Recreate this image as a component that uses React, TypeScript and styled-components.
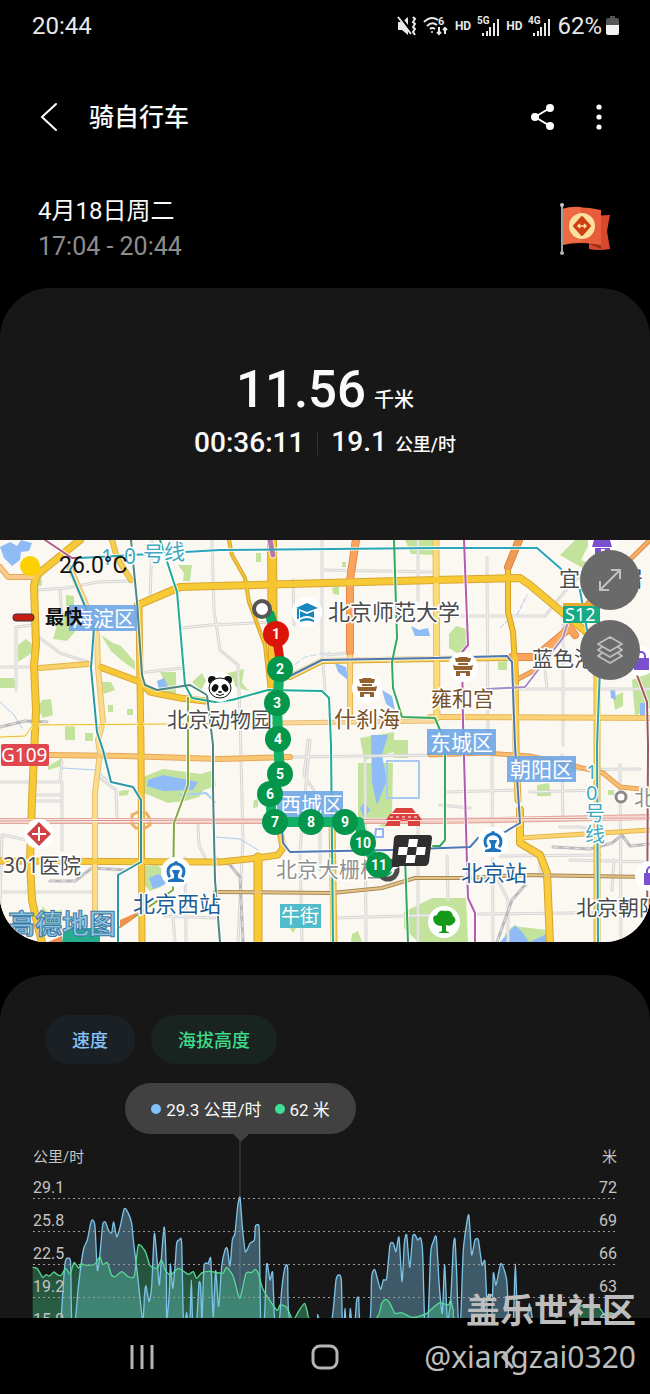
import React from "react";
import styled, { createGlobalStyle, css } from "styled-components";

const sans = `Roboto, "Noto Sans CJK SC", sans-serif`;
const mapSans = `"Noto Sans", "Noto Sans CJK SC", sans-serif`;

const GlobalStyle = createGlobalStyle`
  * { box-sizing: border-box; }
  body { margin: 0; background: #000; font-family: ${sans}; color: #fafafa; }
  button { font: inherit; color: inherit; background: none; border: 0; padding: 0; cursor: pointer; }
  h1, h2, p { margin: 0; font-weight: inherit; }
  svg { display: block; }
`;

const Screen = styled.div`
  position: relative;
  display: flex;
  flex-direction: column;
  height: 100vh;
  overflow: hidden;
`;

const StatusBar = styled.header`
  display: flex;
  align-items: center;
  justify-content: space-between;
  flex: none;
  height: 52px;
  padding: 0 30px 0 32px;
  font-size: 24px;
  color: #e8e8e8;
`;

const StatusIcons = styled.div`
  display: flex;
  align-items: center;
  gap: 6px;
`;

const Hd = styled.span`
  font-size: 12px;
  font-weight: 700;
`;

const BatteryGroup = styled.span`
  display: flex;
  align-items: center;
  gap: 4px;
`;

const Content = styled.main`
  flex: 1;
  min-height: 0;
  overflow: hidden;
`;

const AppBar = styled.div`
  display: flex;
  align-items: center;
  height: 130px;
  padding: 0 38px 0 36px;
`;

const Title = styled.h1`
  flex: 1;
  padding: 2px 0 0 27px;
  font-size: 25px;
  line-height: 36px;
  font-weight: 500;
`;

const IconButton = styled.button`
  display: grid;
  place-items: center;
  width: 26px;
  height: 36px;
  & + & { margin-left: 30px; }
`;

const DateRow = styled.section`
  display: flex;
  align-items: center;
  justify-content: space-between;
  height: 106px;
  padding: 0 39px 12px 38px;
`;

const DateText = styled.h2`
  font-size: 24px;
  line-height: 36px;
`;

const TimeRange = styled.p`
  font-size: 25px;
  line-height: 36px;
  color: #8d8d8d;
`;

const Summary = styled.section`
  display: flex;
  flex-direction: column;
  align-items: center;
  height: 252px;
  padding-top: 72px;
  background: #171717;
  border-radius: 50px 50px 0 0;
  font-weight: 500;
`;

const Distance = styled.p`
  font-size: 51px;
  line-height: 60px;
`;

const Unit = styled.span<{ $size: number }>`
  margin-left: 8px;
  font-size: ${(p) => p.$size}px;
`;

const Stats = styled.div`
  display: flex;
  align-items: center;
  height: 26px;
  font-size: 28px;
  line-height: 26px;
`;

const Divider = styled.span`
  width: 1px;
  height: 24px;
  margin: 0 13px;
  background: #333;
`;

const MapPanel = styled.section`
  position: relative;
  height: 402px;
  overflow: hidden;
  border-radius: 0 0 46px 46px;
  background: #fbf8f1;
`;

const MapTools = styled.div`
  position: absolute;
  top: 10px;
  right: 10px;
  display: grid;
  gap: 10px;
`;

const RoundButton = styled.button`
  display: grid;
  place-items: center;
  width: 60px;
  height: 60px;
  border-radius: 50%;
  background: #6a6a6a;
`;

const ChartCard = styled.section`
  height: 400px;
  margin-top: 33px;
  padding-top: 40px;
  background: #171717;
  border-radius: 46px 46px 0 0;
`;

const Chips = styled.div`
  display: flex;
  gap: 16px;
  padding-left: 45px;
`;

const Chip = styled.button<{ $tone: "speed" | "height" }>`
  height: 49px;
  padding: 0 27px 2px;
  border-radius: 25px;
  font-size: 18px;
  font-weight: 500;
  ${(p) =>
    p.$tone === "speed"
      ? css`color: #86c0f8; background: #1b2025;`
      : css`color: #3fd98a; background: #19231f;`}
`;

const Tip = styled.div`
  position: relative;
  display: flex;
  align-items: center;
  justify-content: center;
  width: 231px;
  height: 51px;
  margin: 19px 0 0 125px;
  border-radius: 26px;
  background: #414141;
  font-size: 17px;
  &::after {
    content: "";
    position: absolute;
    top: 100%;
    left: 50%;
    margin-left: -8px;
    border: 8px solid transparent;
    border-top-color: #414141;
    border-bottom: 0;
  }
`;

const Dot = styled.span<{ $color: string }>`
  width: 10px;
  height: 10px;
  margin-right: 5px;
  border-radius: 50%;
  background: ${(p) => p.$color};
  span + & { margin-left: 13px; }
`;

const Chart = styled.div`
  position: relative;
  margin-top: 6px;
  padding: 0 33px;
  color: #c4c4c4;
  font-size: 16px;
`;

const ChartDrawing = styled.svg`
  position: absolute;
  left: 0;
  top: 0;
  width: 100%;
  height: 178px;
`;

const AxisRow = styled.div`
  position: relative;
  display: flex;
  justify-content: space-between;
  align-items: flex-end;
  height: 33px;
  padding-bottom: 1px;
  line-height: 20px;
  background: repeating-linear-gradient(90deg, #9a9a9a 0 2px, transparent 2px 5px) left bottom / 100% 1px no-repeat;
`;

const AxisTitles = styled.div`
  position: relative;
  display: flex;
  justify-content: space-between;
  height: 26px;
  padding-top: 7px;
  font-size: 15px;
  line-height: 20px;
`;

const NavBar = styled.nav`
  display: grid;
  grid-template-columns: repeat(3, 1fr);
  flex: none;
  height: 76px;
  padding: 2px 51px 0;
  background: #000;
  button { display: grid; place-items: center; }
`;

const Watermark = styled.div`
  position: absolute;
  right: 14px;
  bottom: 14px;
  text-align: right;
  color: #bdbdbd;
  pointer-events: none;
`;

const WatermarkName = styled.p`
  font-size: 34px;
  line-height: 46px;
  font-weight: 700;
`;

const WatermarkUser = styled.p`
  font-family: "Noto Sans", sans-serif;
  font-size: 30px;
  line-height: 46px;
`;

const Line = styled.path`
  fill: none;
  stroke-linejoin: round;
  stroke-linecap: round;
`;

const Place = styled.text<{ $tone?: string; $size?: number }>`
  font-family: ${mapSans};
  font-size: ${(p) => p.$size ?? 21}px;
  fill: ${(p) => p.$tone ?? "#4b4b4b"};
  stroke: #fff;
  stroke-width: 3px;
  stroke-linejoin: round;
  paint-order: stroke;
`;

const TagText = styled.text<{ $size?: number }>`
  font-family: ${mapSans};
  font-size: ${(p) => p.$size ?? 21}px;
  fill: #fff;
`;

const MapInfo = styled.text<{ $bold?: boolean }>`
  font-family: ${sans};
  font-size: ${(p) => (p.$bold ? 19 : 23)}px;
  font-weight: ${(p) => (p.$bold ? 700 : 400)};
  fill: #111;
`;

const StopText = styled.text`
  font-family: ${sans};
  font-size: 14px;
  font-weight: 700;
  fill: #fff;
  text-anchor: middle;
`;

const Brand = styled.text`
  font-family: "Noto Sans CJK SC", sans-serif;
  font-size: 27px;
  font-weight: 700;
  fill: #8fc4de;
  stroke: #3b78a6;
  stroke-width: 1px;
`;

/* ---------- map data ---------- */

const streets = [
  "M38 50 L66 48 L98 42 L130 41", "M0 127 L33 127", "M16 150 L16 87 L34 85", "M60 50 L62 78",
  "M40 98 L60 113 L88 122", "M138 133 L182 128", "M182 88 L220 84", "M212 0 L214 70 L220 110 L238 125 L240 175 L243 300 L238 402",
  "M215 85 L272 82", "M293 40 L294 85", "M322 0 L322 112 L325 150", "M322 30 L436 32", "M326 115 L350 113", "M418 0 L418 60",
  "M487 18 L488 205", "M436 76 L545 76 L570 45 L610 10", "M563 85 L563 205", "M516 149 L650 149", "M545 130 L547 148",
  "M0 242 L60 242 L62 222", "M62 242 L62 310", "M36 255 L60 255", "M36 261 L60 261", "M0 300 L4 295 L26 300", "M0 352 L95 352",
  "M100 238 L116 250 L117 278", "M198 285 L199 305 L205 318", "M172 365 L175 402", "M0 365 L2 295", "M165 376 L215 378", "M310 200 L300 310 L302 402",
  "M308 200 L304 235 L320 260 L320 330", "M290 217 L436 215", "M333 378 L436 375", "M365 220 L366 402", "M448 252 L520 250", "M530 252 L597 250",
  "M492 213 L493 402", "M562 215 L563 280", "M447 316 L448 360", "M500 316 L600 315", "M570 320 L650 322", "M498 340 L508 360 L508 402",
  "M478 374 L650 372", "M620 225 L621 402", "M540 312 L540 335", "M614 320 L612 350", "M440 265 L470 268", "M560 287 L580 287 L598 290",
  "M418 280 L418 402", "M520 230 L640 229", "M152 0 L150 60", "M185 318 L186 402",
];

const parks = [
  "M66 55 l8 1 l0 10 l-8 0z", "M60 75 l5 -3 l10 20 l-8 9 l-14 -2z", "M35 28 l6 -2 l1 19 l-6 3z", "M18 105 l8 -6 l6 5 l0 9 l-14 9z",
  "M178 25 l14 0 l-2 16 l-7 0 l1 -8z", "M101 95 l12 8 l8 3 l14 16 l0 8 l-14 -10 l-10 -9z", "M99 142 l12 0 l4 8 l-11 4z", "M160 132 l16 0 l0 26 l-14 -6 l3 -10z",
  "M192 142 l10 -9 l4 8 l-5 9z", "M108 165 l5 0 l0 7 l-5 0z", "M127 169 l6 0 l0 6 l-6 0z", "M42 160 l9 -1 l2 16 l-10 3 l-6 -10z", "M0 138 l14 0 l2 10 l-16 0z",
  "M65 185 l10 0 l0 15 l-10 0z", "M85 193 l8 0 l0 8 l-8 0z", "M224 134 l20 -5 l-2 14 l7 8 l-13 -4z", "M256 13 l5 0 l0 9 l-5 0z",
  "M342 22 l4 0 l0 5 l-4 0z", "M332 48 l7 -2 l0 9 l-6 -1z", "M405 0 l28 0 l0 15 l-22 -1z", "M449 94 l7 -8 l10 3 l0 22 l-8 3 l-9 -6z",
  "M560 15 l15 -15 l16 0 l-10 20 l10 4 l-5 6z", "M498 122 l9 -1 l0 9 l-9 0z", "M613 157 l10 -5 l0 14 l-8 4z", "M632 140 l18 -8 l0 36 l-15 8z", "M600 23 l12 -4 l-3 10z",
  "M48 226 l14 -8 l0 8 l-14 4z", "M143 237 l20 -8 l38 5 l12 -4 l3 16 l-12 4 l-5 7 l-14 4 l-17 2 l-24 -10z", "M119 251 l10 -1 l-1 5 l-9 1z",
  "M144 326 l14 -1 l5 6 l-2 16 l-11 4 l-6 -6z", "M42 366 l6 6 l14 -2 l-2 18 l-17 -2z", "M358 223 l35 0 l-1 55 l-34 0z", "M393 200 l15 0 l0 18 l-14 0z",
  "M387 282 l-1 5 l-8 -1z", "M404 372 l28 -14 l34 0 l2 44 l-50 0 l-14 -14z", "M537 245 l12 -2 l2 13 l-14 0z", "M608 250 l6 0 l0 5 l-6 0z",
  "M505 394 l8 -8 l34 4 l-2 12 l-40 0z", "M352 394 l6 -3 l4 11 l-11 0z", "M360 198 l34 -6 l0 20 l-30 8z", "M254 260 l4 -1 l0 8 l-5 1z", "M288 386 l8 2 l-3 5z",
];

const waters = [
  "M0 7 L10 2 L17 6 L21 0 L32 3 L29 11 L21 12 L20 20 L12 26 L4 18z", "M157 141 l7 -3 l4 8 l-9 4z", "M148 240 l15 -5 l35 7 l-5 8 l-30 1 l-16 -5z",
  "M149 338 l9 -4 l10 6 l-4 5 l-11 4z", "M371 195 l17 0 l-6 20 l5 25 l-10 25 l-5 -22z", "M360 268 l5 -6 l5 8 l-6 8z", "M335 123 l11 4 l2 13 l-10 -8z",
  "M382 150 l10 6 l3 14 l-9 -6z", "M411 86 l8 4 l9 -2 l2 8 l-15 0z", "M515 385 l8 8 l6 9 l18 -8 l1 8 l-48 0z", "M610 147 l5 3 l1 10 l-5 -2z", "M640 163 l5 0 l0 12 l-5 2z",
];

type Route = [string, string, number, string?];

/* path, colour, width, edge colour */
const roads: Route[] = [
  ["M0 281 L440 281 L650 277", "#f4c9bd", 5, "#dda79c"],
  ["M0 27 L8 37 L34 37", "#f8c98a", 5, "#e2a75a"],
  ["M70 28 L85 62 L97 95 L98 128 L103 182 L98 200 L100 213 L95 253 L95 373", "#fbdc8e", 5, "#eac069"],
  ["M112 0 L117 18 L131 40", "#f7cf4f", 5, "#dfb043"],
  ["M40 128 L88 124", "#f8d268", 5, "#e3b54b"],
  ["M50 215 L123 216 L220 219 L290 217", "#f9c672", 5, "#e4a75a"],
  ["M275 183 L435 181", "#fad79a", 4, "#e8bd76"],
  ["M430 177 L650 178", "#fad277", 5, "#e8b659"],
  ["M436 0 L437 178", "#fbdc7d", 6, "#e9bd5b"],
  ["M355 0 L350 35 L350 110 L350 181", "#fbd47b", 5, "#e8b458"],
  ["M356 0 L350 40 L350 112", "#f9a35d", 7, "#e58a48"],
  ["M512 117 L535 117 L570 88 L575 95", "#f9a35d", 7, "#e58a48"],
  ["M650 0 L604 45 L566 88 L535 130 L518 139", "#f7ae62", 4, "#e08e4c"],
  ["M430 215 L485 213 L530 216 L570 225 L603 233 L620 247 L650 250", "#f9bd6c", 4, "#e09f55"],
  ["M520 298 L650 290", "#fad46f", 4, "#e6b553"],
  ["M597 128 L597 402", "#f9d35c", 6, "#dfb23f"],
  ["M515 118 L516 205 L518 260", "#f9cf50", 6, "#dcae3d"],
  ["M332 281 L334 402", "#f9d35c", 6, "#dfb23f"],
  ["M100 127 L140 142 L150 152 L180 158 L205 161", "#f7c937", 6, "#dba634"],
  ["M290 137 L322 121 L435 119 L507 118", "#f8d45a", 5, "#d7a838"],
  ["M0 321 L220 322 L258 318 L278 315 L283 308 L280 290", "#f7ca3b", 6, "#d8a733"],
  ["M139 65 L140 142 L141 205 L142 402", "#f7ca3b", 6, "#dba534"],
  ["M80 0 L37 35 L34 45 L36 105 L34 125 L36 170 L32 260 L30 323 L32 360 L38 387 L42 402", "#f7c934", 7, "#d9a733"],
  ["M138 65 L180 47 L215 46 L362 42 L435 40 L520 38 L530 45 L562 72 L590 95", "#f7c934", 7, "#d8a733"],
  ["M272 0 L273 150", "#f7c430", 9, "#d6a32c"],
  ["M258 317 L258 402", "#f9c933", 8, "#d6a32c"],
  ["M520 270 L520 303 L540 315 L547 333 L550 402", "#f9cd3e", 7, "#d6a32c"],
  ["M520 0 L508 28 L508 72 L513 92 L516 142", "#f5c62f", 5, "#cf9f2e"],
  ["M519 0 L508 27", "#f19a52", 7, "#d98442"],
  ["M229 0 L232 15 L245 38 L249 62 L265 105 L270 152", "#f4c62f", 3, "#d3a42f"],
  ["M0 197 L25 196 L33 185 L175 184 L275 183", "#e7bd2d", 2, "#fdf7dc"],
  ["M215 352 L332 353 L382 348 L415 338 L467 338 L520 335 L650 337", "#e2c38b", 3, "#a98952"],
];

const metro: Route[] = [
  ["M45 0 L72 18 L80 18", "#b25a8a", 2],
  ["M270 0 L273 15", "#b27bb0", 5],
  ["M80 18 L220 10 L435 8 L537 8 L560 28 L580 50 L587 90 L600 128 L597 205 L598 402", "#2aa5b8", 2],
  ["M78 18 L70 30 L94 88 L91 128 L97 192 L103 210 L111 242 L133 247 L141 260 L141 322 L118 335 L118 402", "#2a97a6", 2],
  ["M160 0 L177 52 L185 145 L192 158 L215 162 L232 160 L268 150 L322 151 L329 158 L331 205 L333 402", "#1fab98", 2],
  ["M131 0 L137 62 L142 135 L145 145 L157 150 L190 145 L207 155 L213 205 L213 250 L215 340 L220 402", "#4d8580", 2],
  ["M188 158 L188 245 L174 283 L173 350 L120 387", "#83a83b", 2],
  ["M394 0 L397 98 L392 122 L393 148 L402 177 L435 178 L442 195 L445 213 L445 300 L440 306 L433 306", "#35a85a", 2],
  ["M405 317 L408 402", "#35a85a", 2],
  ["M464 0 L468 105 L462 112 L463 182 L468 358 L475 373 L475 402", "#b45aae", 2],
  ["M290 136 L322 120 L435 118 L507 116 L512 122 L515 205 L517 237 L520 283 L505 292 L478 298 L470 307 L390 310 L290 312 L283 303 L282 290", "#4d78b4", 2],
  ["M487 149 L525 147 L563 98 L567 85", "#a08ec4", 2],
  ["M637 135 L647 162 L648 205 L647 402", "#a2575c", 2],
  ["M0 281 L650 278", "#d58d88", 1],
];

const rails = [
  "M0 187 L25 181 L47 182", "M50 341 L75 341 L92 328 L125 330", "M497 402 L512 360 L525 345", "M553 307 L590 309 L612 303 L622 295 L630 306 L650 304",
  "M215 318 L230 325 L240 337 L243 402",
];

const stops: [number, number][] = [
  [276, 94], [280, 129], [277, 163], [278, 199], [280, 234], [270, 254], [275, 282], [311, 282], [345, 282], [363, 303], [379, 325],
];

const tags: [string, number, number, number, string][] = [
  ["海淀区", 69, 65, 68, "#6ea5e5"], ["西城区", 277, 251, 66, "#6ea5e5"], ["东城区", 427, 189, 69, "#6ea5e5"], ["朝阳区", 507, 216, 69, "#6ea5e5"],
];

const lineName: [string, number, number][] = [["1", 101, 25], ["0", 124, 24], ["号", 143, 21], ["线", 164, 19]];

const Pagoda = ({ x, y }: { x: number; y: number }) => (
  <g transform={`translate(${x} ${y})`}>
    <circle r="15" fill="#fff" />
    <g fill="#94612f">
      <path d="M-8 -9 L-5 -9 L-4 -10 H4 L5 -9 L8 -9 L7 -5 H-7z M-5 -4 H5 V-2 H-5z M-10 -2 L-7 -1 H7 L10 -2 L9 3 H-9z" />
      <path d="M-7 4 H7 V9 H3 V6 H-3 V9 H-7z" />
    </g>
  </g>
);

const Station = ({ x, y }: { x: number; y: number }) => (
  <g transform={`translate(${x} ${y})`}>
    <circle r="15" fill="#fff" />
    <path d="M-6 5 A8 8 0 1 1 6 5" fill="none" stroke="#1d74bd" strokeWidth="3" />
    <circle cy="-9" r="2" fill="#1d74bd" />
    <path d="M-4 -2 H4 L3 1 L2 2 V6 L8 8 V10 H-8 V8 L-2 6 V2 L-3 1z" fill="#1d74bd" />
  </g>
);

const Bag = ({ x, y }: { x: number; y: number }) => (
  <g transform={`translate(${x} ${y})`}>
    <circle r="15" fill="#fff" />
    <path d="M-3 -3 V-5 A4 4 0 0 1 5 -5 V-3" fill="none" stroke="#7a4fd0" strokeWidth="2" />
    <path d="M-6 -3 H9 V9 H-6z" fill="#7a4fd0" />
  </g>
);

const RideMap = () => (
  <svg width="100%" height="402" viewBox="0 0 650 402" preserveAspectRatio="xMidYMid slice" role="img" aria-label="骑行路线">
    <rect width="650" height="402" fill="#fbf8f1" />
    {parks.map((d) => <path key={d} d={d} fill="#c3e39d" />)}
    {waters.map((d) => <path key={d} d={d} fill="#8fbcf6" />)}
    <g>
      {streets.map((d) => <Line key={d} d={d} stroke="#d9d7d6" strokeWidth="3" />)}
      {streets.map((d) => <Line key={d} d={d} stroke="#f3f1ee" strokeWidth="1" />)}
    </g>
    <Line d="M387 221 H419 V258 H387z" stroke="#a9c9f0" strokeWidth="2" fill="#fbf8f1" />
    <Line d="M62 228 L95 230 L108 240" stroke="#a8cdf2" strokeWidth="1" />
    <Line d="M180 255 L206 253 L215 262" stroke="#a8cdf2" strokeWidth="2" />
    <Line d="M215 297 L240 299 L258 310" stroke="#a8cdf2" strokeWidth="1" />
    <Line d="M288 130 L305 117 L330 112" stroke="#bcd3ee" strokeWidth="1" strokeDasharray="6 3" />
    <Line d="M0 162 L14 175 L22 188" stroke="#a8cdf2" strokeWidth="1" />
    <Line d="M517 75 L527 55 M500 88 L512 76" stroke="#a8c6ee" strokeWidth="1" strokeDasharray="5 2" />
    {rails.map((d) => <Line key={d} d={d} stroke="#b9b9bc" strokeWidth="3" />)}
    {rails.map((d) => <Line key={d} d={d} stroke="#ecebeb" strokeWidth="1" strokeDasharray="5 6" />)}
    {roads.map(([d, , w, edge]) => <Line key={d} d={d} stroke={edge} strokeWidth={w + 1} />)}
    {roads.map(([d, color, w]) => <Line key={d} d={d} stroke={color} strokeWidth={w - 1} />)}
    <path d="M132 275 L138 272 L146 273 L150 279 L150 285 L145 288 L136 288 L132 284z" fill="none" stroke="#ecae62" strokeWidth="3" />
    {metro.map(([d, , w]) => <Line key={d} d={d} stroke="#fff" strokeOpacity="0.7" strokeWidth={w + 2} />)}
    {metro.map(([d, color, w]) => <Line key={d} d={d} stroke={color} strokeWidth={w} />)}
    <path d="M120 380 L138 372 L132 380 L120 388z" fill="#f0914c" />

    {tags.map(([name, x, y, w, color]) => (
      <g key={name}>
        <rect x={x} y={y} width={w} height="26" fill={color} fillOpacity="0.9" />
        <TagText x={x + 3} y={y + 21}>{name}</TagText>
      </g>
    ))}
    <rect x="280" y="364" width="41" height="24" fill="#50bbca" />
    <TagText $size={19} x="281" y="383">牛街</TagText>
    <rect x="563" y="66" width="37" height="17" rx="1" fill="#17aa86" />
    <rect x="563" y="63" width="37" height="3" fill="#e8a92c" />
    <TagText $size={18} x="565" y="81">S12</TagText>
    <rect x="1" y="204" width="48" height="22" rx="2" fill="#e0474d" />
    <TagText $size={19} x="1" y="222">G109</TagText>

    {lineName.map(([c, x, y]) => <Place key={c} $tone="#3fa9c0" x={x} y={y}>{c}</Place>)}
    {["1", "0", "号", "线"].map((c, i) => (
      <Place key={c} $tone="#3fa9c0" $size={20} x={i < 2 ? 586 : 585} y={239 + i * 21}>{c}</Place>
    ))}

    <circle cx="307" cy="72" r="15" fill="#fff" />
    <path d="M296 68 L307 63 L318 68 L307 72z M300 71 L307 74 L314 71 V78 Q307 74 300 78z M300 80 Q307 76 314 80 V82 Q307 79 300 82z" fill="#1787bd" />
    <path d="M298 69 V79" stroke="#1787bd" strokeWidth="2" />
    <Place $size={22} x="328" y="80">北京师范大学</Place>
    <Pagoda x={367} y={148} />
    <Place $tone="#775027" $size={22} x="334" y="187">什刹海</Place>
    <Pagoda x={463} y={127} />
    <Place $tone="#775027" x="431" y="166">雍和宫</Place>

    <g transform="translate(220 147)">
      <circle r="15" fill="#fff" />
      <circle cx="-8" cy="-7" r="4" fill="#111" />
      <circle cx="8" cy="-7" r="4" fill="#111" />
      <ellipse cy="1" rx="11" ry="10" fill="#fff" stroke="#111" strokeWidth="1" />
      <ellipse cx="-5" cy="1" rx="3" ry="4" transform="rotate(30 -5 1)" fill="#111" />
      <ellipse cx="5" cy="1" rx="3" ry="4" transform="rotate(-30 5 1)" fill="#111" />
      <ellipse cy="5" rx="2" ry="1" fill="#111" />
      <path d="M-4 7 Q0 10 4 7" fill="none" stroke="#111" />
    </g>
    <Place x="167" y="187">北京动物园</Place>

    <circle cx="39" cy="294" r="15" fill="#fff" />
    <path d="M39 282 L51 294 L39 306 L27 294z" fill="#cf4347" />
    <path d="M39 287 V301 M32 294 H46" stroke="#fff" strokeWidth="2" />
    <Place x="3" y="333">301医院</Place>
    <Station x={176} y={332} />
    <Place $tone="#1c5d93" $size={22} x="133" y="372">北京西站</Place>
    <Station x={493} y={302} />
    <Place $tone="#1c5d93" $size={22} x="461" y="341">北京站</Place>
    <Place $tone="#909090" x="276" y="337">北京大栅栏</Place>
    <circle cx="621" cy="257" r="5" fill="#fff" stroke="#8a8a8a" strokeWidth="3" />
    <Place $tone="#909090" x="634" y="265">北京</Place>
    <circle cx="603" cy="2" r="15" fill="#fff" />
    <path d="M594 0 H610 L612 7 H592z M595 8 H610 V14 H595z" fill="#7a4fd0" />
    <path d="M601 9 H605 V14 H601z" fill="#fff" />
    <Place x="559" y="46">宜家家居</Place>
    <Bag x={640} y={121} />
    <Place x="532" y="126">蓝色港湾</Place>
    <Bag x={650} y={336} />
    <Place x="576" y="375">北京朝阳站</Place>
    <circle cx="444" cy="382" r="16" fill="#fff" />
    <path d="M434 382 Q431 376 437 375 Q439 369 445 371 Q452 370 453 376 Q458 380 453 384 Q450 387 446 385 V391 L450 393 H438 L442 391 V386 Q436 386 434 382z" fill="#159a17" />

    <g fill="#dc403c">
      <path d="M386 280 L390 274 H418 L422 280z M392 273 L396 268 H412 L416 273z M388 281 H420 V286 H408 V283 A4 4 0 0 0 400 283 V286 H385z" />
    </g>
    <path d="M390 277 H418" stroke="#fff" strokeWidth="1" strokeDasharray="3 3" />
    <path d="M376 289 h7 v8 h-8z" fill="#fff" stroke="#8fb7ed" strokeWidth="2" />

    <circle cx="388" cy="330" r="9" fill="#fff" stroke="#4d4d4d" strokeWidth="5" />
    <Line d="M262 69 L270 75 L276 94" stroke="#07a458" strokeWidth="10" />
    <Line d="M280 129 L277 163 L278 199 L280 234 L270 254 L272 282 L345 282 L359 282 L363 303 L379 325 L387 331" stroke="#13b165" strokeWidth="10" />
    <Line d="M276 94 L280 120" stroke="#d8180d" strokeWidth="9" />
    <circle cx="262" cy="69" r="8" fill="#fff" stroke="#555" strokeWidth="4" />
    <path d="M398 295 H429 Q432 295 432 298 L429 322 Q428 326 425 326 H400 L384 336 L392 322 L394 298 Q395 295 398 295z" fill="#2f2f2f" />
    <path d="M393 327 L384 336 L399 327z" fill="#fff" />
    <g fill="#fff" transform="translate(400 299) skewX(-8)">
      <path d="M9 0 h9 v8 h-9z M0 8 h9 v8 h-9z M18 8 h9 v8 h-9z M9 16 h9 v8 h-9z" />
    </g>
    {stops.map(([x, y], i) => (
      <g key={i}>
        <circle cx={x} cy={y} r="13" fill={i === 0 ? "#dc1408" : "#04964b"} />
        <StopText x={x} y={y + 5}>{i + 1}</StopText>
      </g>
    ))}

    <circle cx="30" cy="26" r="10" fill="#fdd000" />
    <MapInfo x="59" y="33">26.0°C</MapInfo>
    <rect x="13" y="74" width="21" height="7" rx="3" fill="#c81e14" stroke="#333" />
    <MapInfo $bold x="45" y="84">最快</MapInfo>
    <path d="M64 388 H100 V402 H62z" fill="#25ad8d" />
    <path d="M48 402 L62 396 V402z" fill="#f08a4a" />
    <Brand x="8" y="394">高德地图</Brand>
  </svg>
);

/* ---------- chart data, in plot units (a third of a pixel) ---------- */

type Point = [number, number];

const speed: Point[] = [
  [183, 540], [195, 370], [205, 355], [212, 370], [215, 540], [226, 540], [235, 440], [250, 330], [262, 300], [272, 250], [278, 240], [285, 260],
  [292, 390], [300, 340], [308, 255], [316, 246], [326, 272], [335, 278], [341, 246], [350, 290], [360, 262], [373, 206], [385, 220], [395, 250],
  [400, 300], [412, 400], [428, 540], [434, 460], [438, 438], [447, 485], [455, 440], [463, 280], [472, 370], [478, 435], [486, 330], [493, 262],
  [499, 400], [500, 540], [508, 460], [511, 372], [518, 445], [525, 380], [530, 310], [538, 300], [545, 310], [550, 540], [556, 540], [560, 517],
  [563, 540], [570, 540], [574, 420], [578, 540], [590, 540], [597, 430], [602, 440], [606, 540], [612, 380], [625, 370], [632, 354], [636, 450],
  [640, 530], [647, 392], [656, 500], [665, 380], [675, 330], [682, 326], [690, 378], [697, 300], [705, 280], [713, 200], [720, 172], [727, 260],
  [736, 335], [750, 310], [763, 300], [766, 260], [772, 255], [778, 275], [782, 540], [793, 540], [800, 372], [810, 420], [818, 398], [824, 540],
  [838, 540], [845, 450], [855, 382], [863, 385], [870, 540], [948, 540], [953, 524], [960, 540],
  [995, 540], [1008, 420], [1017, 405], [1024, 420], [1027, 540], [1033, 540], [1035, 505], [1038, 540], [1048, 540], [1051, 505], [1055, 540],
  [1065, 540], [1070, 480], [1076, 474], [1080, 540], [1110, 540], [1115, 410], [1124, 388], [1132, 415], [1142, 448], [1150, 420], [1160, 415],
  [1170, 315], [1180, 310], [1188, 335], [1197, 292], [1206, 425], [1213, 310], [1220, 285], [1229, 382], [1238, 290], [1246, 286], [1253, 300],
  [1262, 294], [1268, 340], [1274, 540], [1284, 540], [1292, 340], [1300, 305], [1309, 293], [1318, 440], [1327, 520], [1334, 375], [1342, 540],
  [1352, 480], [1360, 320], [1365, 298], [1370, 400], [1375, 540], [1382, 540], [1390, 330], [1405, 225], [1410, 270], [1415, 345], [1425, 300],
  [1435, 300], [1446, 375], [1455, 366], [1463, 540], [1475, 540], [1480, 400], [1488, 435], [1503, 370], [1520, 420], [1527, 540], [1540, 540],
  [1546, 372], [1554, 540], [1580, 540], [1588, 490], [1598, 540],
];

const elevation: Point[] = [
  [98, 382], [112, 386], [128, 412], [138, 404], [148, 408], [162, 396], [172, 404], [184, 406], [197, 385], [210, 402], [222, 368], [236, 384],
  [243, 372], [262, 376], [285, 372], [300, 350], [308, 374], [322, 368], [334, 404], [346, 410], [365, 395], [385, 410], [403, 408], [415, 316],
  [436, 335], [450, 376], [472, 385], [484, 360], [496, 390], [512, 405], [535, 385], [565, 403], [580, 395], [590, 415], [606, 398], [630, 394],
  [668, 400], [680, 382], [698, 405], [706, 430], [720, 475], [738, 400], [755, 398], [765, 388], [775, 400], [790, 450], [830, 510], [840, 495],
  [860, 502], [878, 540], [885, 534], [895, 515], [914, 490], [922, 515], [940, 540], [1120, 540], [1145, 490], [1157, 478], [1170, 490],
  [1185, 520], [1205, 518], [1235, 532], [1260, 528], [1280, 520], [1305, 498], [1320, 488], [1345, 495], [1352, 480], [1360, 510], [1380, 540],
  [1650, 540], [1665, 522], [1680, 540], [1720, 540], [1740, 500], [1760, 495], [1775, 505], [1795, 500], [1818, 530], [1830, 518], [1850, 525],
];

/* Rounded line through every sample, with softened control points. */
const curve = (pts: Point[]) =>
  pts.reduce((d, p, i) => {
    if (i === 0) return `M${p[0]} ${p[1]}`;
    const a = pts[i - 1];
    const before = pts[i - 2] ?? a;
    const after = pts[i + 1] ?? p;
    const k = 9;
    return `${d} C${a[0] + (p[0] - before[0]) / k} ${a[1] + (p[1] - before[1]) / k} ${p[0] - (after[0] - a[0]) / k} ${p[1] - (after[1] - a[1]) / k} ${p[0]} ${p[1]}`;
  }, "");

const area = (pts: Point[]) => `${curve(pts)} L${pts[pts.length - 1][0]} 560 L${pts[0][0]} 560z`;

const axis = [["29.1", "72"], ["25.8", "69"], ["22.5", "66"], ["19.2", "63"], ["15.9", "60"]];

const SignalBars = ({ label }: { label: string }) => (
  <svg width="23" height="22" viewBox="0 0 23 22" fill="#e8e8e8">
    <text x="0" y="9" fontSize="10" fontWeight="700" fontFamily="Roboto, sans-serif">{label}</text>
    <path d="M5 18h2v3H5z M9 16h2v5H9z M12 12h2v9h-2z M16 8h2v13h-2z M20 4h2v17h-2z" />
  </svg>
);

export default function App() {
  return (
    <>
      <GlobalStyle />
      <Screen>
        <StatusBar>
          <span>20:44</span>
          <StatusIcons>
            <svg width="20" height="20" viewBox="0 0 20 20" fill="#e8e8e8">
              <path d="M1 6h4l6-5v18l-6-5H1z" />
              <path d="M3 1L15 17" stroke="#000" strokeWidth="3" />
              <path d="M1 1L14 18M16 1l2 2-2 3 2 2-2 3 2 2-2 3 2 3" fill="none" stroke="#e8e8e8" strokeWidth="2" />
            </svg>
            <svg width="26" height="20" viewBox="0 0 26 20" fill="none" stroke="#e8e8e8" strokeWidth="2">
              <path d="M1 6Q8 -1 15 4M4 10Q9 5 14 9M7 13Q9 11 12 13" />
              <circle cx="9" cy="16" r="1" fill="#e8e8e8" stroke="none" />
              <text x="15" y="9" fontSize="11" fontWeight="700" fontFamily="Roboto, sans-serif" fill="#e8e8e8" stroke="none">6</text>
              <path d="M16 11v7M14 16l2 2 2-2M22 18v-6M20 14l2-2 2 2" />
            </svg>
            <Hd>HD</Hd>
            <SignalBars label="5G" />
            <Hd>HD</Hd>
            <SignalBars label="4G" />
            <BatteryGroup>
              62%
              <svg width="14" height="20" viewBox="0 0 14 20">
                <path d="M4 0h5v2h2q2 0 2 2v6H0V4q0-2 2-2h2z" fill="#565656" />
                <path d="M0 9h13v8q0 2-2 2H2q-2 0-2-2z" fill="#f2f2f2" />
              </svg>
            </BatteryGroup>
          </StatusIcons>
        </StatusBar>

        <Content>
          <AppBar>
            <IconButton aria-label="返回">
              <svg width="26" height="30" viewBox="0 0 26 30" fill="none" stroke="#fff" strokeWidth="2" strokeLinecap="round">
                <path d="M20 2L6 15L20 28" />
              </svg>
            </IconButton>
            <Title>骑自行车</Title>
            <IconButton aria-label="分享">
              <svg width="26" height="28" viewBox="0 0 26 28" fill="#fff">
                <path d="M20 5L5 14L20 23" fill="none" stroke="#fff" strokeWidth="2" />
                <circle cx="20" cy="5" r="4" /><circle cx="5" cy="14" r="4" /><circle cx="20" cy="23" r="4" />
              </svg>
            </IconButton>
            <IconButton aria-label="更多">
              <svg width="26" height="28" viewBox="0 0 26 28" fill="#fff">
                <circle cx="13" cy="4" r="2.6" /><circle cx="13" cy="14" r="2.6" /><circle cx="13" cy="24" r="2.6" />
              </svg>
            </IconButton>
          </AppBar>

          <DateRow>
            <div>
              <DateText>4月18日周二</DateText>
              <TimeRange>17:04 - 20:44</TimeRange>
            </div>
            <svg width="52" height="54" viewBox="0 0 52 54">
              <path d="M30 14L51 13L48 29L51 47Q40 49 30 47z" fill="#d7492d" />
              <path d="M30 42L42 41L42 47z" fill="#9e2c18" />
              <path d="M3 7Q22 3 42 8V43Q22 39 3 43z" fill="#e85c3a" />
              <path d="M3 7Q12 4 22 5V40Q12 40 3 43z" fill="#ee6a45" />
              <circle cx="23" cy="24" r="13" fill="#fbe0a0" />
              <path d="M23 15L31 24L23 33L15 24z" fill="#cc3f14" stroke="#cc3f14" strokeWidth="2" strokeLinejoin="round" />
              <path d="M21 22L19 24L21 26M25 22L27 24L25 26M19 24H27" fill="none" stroke="#fbe0a0" strokeWidth="1.5" />
              <path d="M3 3V52" stroke="#9aa4a8" strokeWidth="2" />
              <circle cx="3" cy="3" r="2" fill="#c3cbce" /><circle cx="3" cy="51" r="2" fill="#aab2b5" />
            </svg>
          </DateRow>

          <Summary>
            <Distance>11.56<Unit $size={20}>千米</Unit></Distance>
            <Stats>
              <span>00:36:11</span>
              <Divider />
              <span>19.1<Unit $size={18}>公里/时</Unit></span>
            </Stats>
          </Summary>

          <MapPanel>
            <RideMap />
            <MapTools>
              <RoundButton aria-label="全屏">
                <svg width="26" height="26" viewBox="0 0 26 26" fill="none" stroke="#c2c2c2" strokeWidth="2">
                  <path d="M3 23L23 3M14 3H23V12M3 14V23H12" />
                </svg>
              </RoundButton>
              <RoundButton aria-label="图层">
                <svg width="28" height="28" viewBox="0 0 28 28" fill="none" stroke="#bdbdbd" strokeWidth="2" strokeLinejoin="round">
                  <path d="M14 1L26 8L14 15L2 8zM6 11L2 14L14 21L26 14L22 11M6 17L2 20L14 27L26 20L22 17" />
                </svg>
              </RoundButton>
            </MapTools>
          </MapPanel>

          <ChartCard>
            <Chips>
              <Chip $tone="speed">速度</Chip>
              <Chip $tone="height">海拔高度</Chip>
            </Chips>
            <Tip>
              <Dot $color="#82c2fb" /><span>29.3 公里/时</span>
              <Dot $color="#3fe095" /><span>62 米</span>
            </Tip>
            <Chart>
              <ChartDrawing viewBox="0 0 1950 534" role="img" aria-label="速度和海拔高度">
                <defs>
                  <linearGradient id="rise" x1="0" y1="0" x2="0" y2="1">
                    <stop offset="0" stopColor="#37b873" stopOpacity="0.34" />
                    <stop offset="1" stopColor="#44c98a" stopOpacity="0.42" />
                  </linearGradient>
                </defs>
                <path d="M720 0V475" stroke="#3c3c3c" strokeWidth="4" />
                <path d={area(speed)} fill="#6eaacd" fillOpacity="0.45" />
                <path d={area(elevation)} fill="url(#rise)" />
                <path d={curve(speed)} fill="none" stroke="#7cc3e6" strokeWidth="4" strokeLinejoin="round" />
                <path d={curve(elevation)} fill="none" stroke="#58d993" strokeWidth="4" strokeLinejoin="round" />
              </ChartDrawing>
              <AxisTitles><span>公里/时</span><span>米</span></AxisTitles>
              {axis.map(([l, r]) => (
                <AxisRow key={l}><span>{l}</span><span>{r}</span></AxisRow>
              ))}
            </Chart>
          </ChartCard>
        </Content>

        <NavBar>
          <button aria-label="最近">
            <svg width="24" height="24" viewBox="0 0 24 24" stroke="#b5b5b5" strokeWidth="3"><path d="M2 0V24M12 0V24M22 0V24" /></svg>
          </button>
          <button aria-label="主页">
            <svg width="28" height="26" viewBox="0 0 28 26" fill="none" stroke="#b5b5b5" strokeWidth="3"><rect x="2" y="2" width="24" height="22" rx="7" /></svg>
          </button>
          <button aria-label="后退">
            <svg width="14" height="24" viewBox="0 0 14 24" fill="none" stroke="#b5b5b5" strokeWidth="3"><path d="M12 1L2 12L12 23" /></svg>
          </button>
        </NavBar>

        <Watermark>
          <WatermarkName>盖乐世社区</WatermarkName>
          <WatermarkUser>@xiangzai0320</WatermarkUser>
        </Watermark>
      </Screen>
    </>
  );
}
